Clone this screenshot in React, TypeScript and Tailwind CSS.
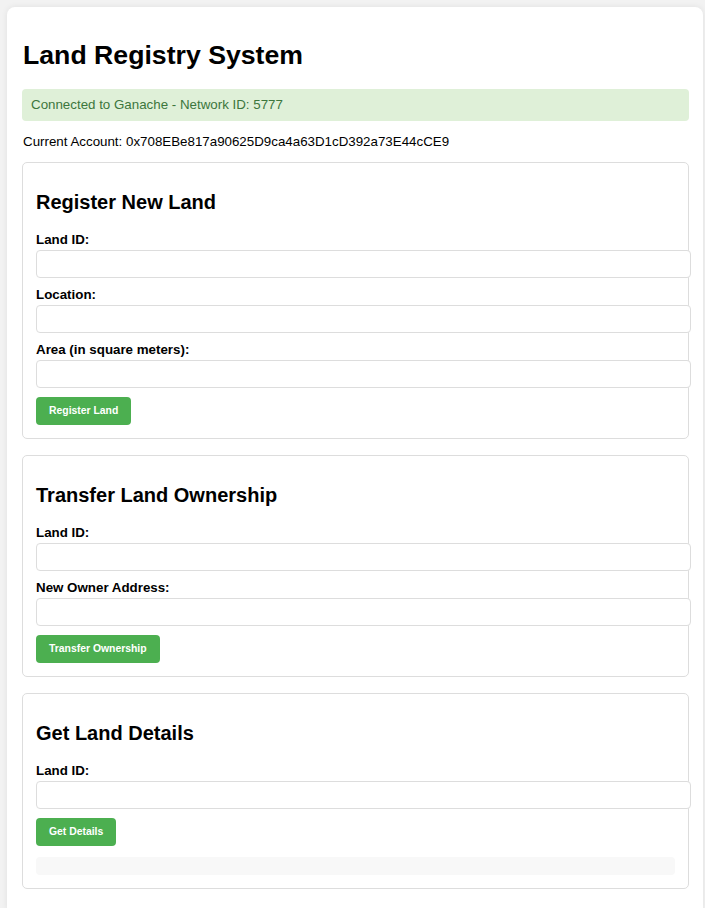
import React, { useState } from "react";

const font = { fontFamily: '"Liberation Sans", Arial, sans-serif' };

function Field({ label }: { label: string }) {
  const [value, setValue] = useState("");
  return (
    <div className="flex flex-col">
      <label className="mb-[2px] block text-[13.33px] font-bold leading-[16px] text-black">
        {label}
      </label>
      <input
        value={value}
        onChange={(e) => setValue(e.target.value)}
        className="mb-[9px] h-[28px] w-[calc(100%+16px)] rounded-[4px] border border-[#dddddd] bg-white px-[8px] text-[13.33px] outline-none"
      />
    </div>
  );
}

function Button({ children }: { children: React.ReactNode }) {
  return (
    <button className="h-[28px] self-start rounded-[4px] bg-[#4caf50] px-[13px] text-[10.4px] font-bold text-white">
      {children}
    </button>
  );
}

function Card({
  title,
  fields,
  action,
  children,
}: {
  title: string;
  fields: string[];
  action: string;
  children?: React.ReactNode;
}) {
  return (
    <section className="flex flex-col rounded-[5px] border border-[#dddddd] px-[13px] pb-[13px] pt-[13px]">
      <h2 className="mb-[18px] mt-[15px] text-[20px] font-bold leading-[23px] text-black">
        {title}
      </h2>
      {fields.map((f) => (
        <Field key={f} label={f} />
      ))}
      <Button>{action}</Button>
      {children}
    </section>
  );
}

export default function App() {
  return (
    <div className="min-h-[908px] bg-[#f2f2f2] pl-[7px] pt-[7px]" style={font}>
      <div className="w-[696px] rounded-t-[8px] bg-white px-[15px] pb-[20px] pt-[15px] shadow-[0_0_6px_rgba(0,0,0,0.08)]">
        <h1 className="mb-[18px] mt-[18px] pl-[1px] text-[26.67px] font-bold leading-[31px] text-black">
          Land Registry System
        </h1>
        <div className="flex h-[32px] w-[667px] items-center rounded-[4px] bg-[#dff0d8] px-[9px] text-[13.33px] text-[#3c763d]">
          Connected to Ganache - Network ID: 5777
        </div>
        <p className="my-[13px] pl-[1px] text-[13.33px] leading-[15px] text-black">
          Current Account: 0x708EBe817a90625D9ca4a63D1cD392a73E44cCE9
        </p>
        <div className="flex w-[667px] flex-col gap-[16px]">
          <Card
            title="Register New Land"
            fields={["Land ID:", "Location:", "Area (in square meters):"]}
            action="Register Land"
          />
          <Card
            title="Transfer Land Ownership"
            fields={["Land ID:", "New Owner Address:"]}
            action="Transfer Ownership"
          />
          <Card title="Get Land Details" fields={["Land ID:"]} action="Get Details">
            <div className="mt-[11px] h-[18px] rounded-[4px] bg-[#f8f8f8]" />
          </Card>
        </div>
      </div>
    </div>
  );
}
